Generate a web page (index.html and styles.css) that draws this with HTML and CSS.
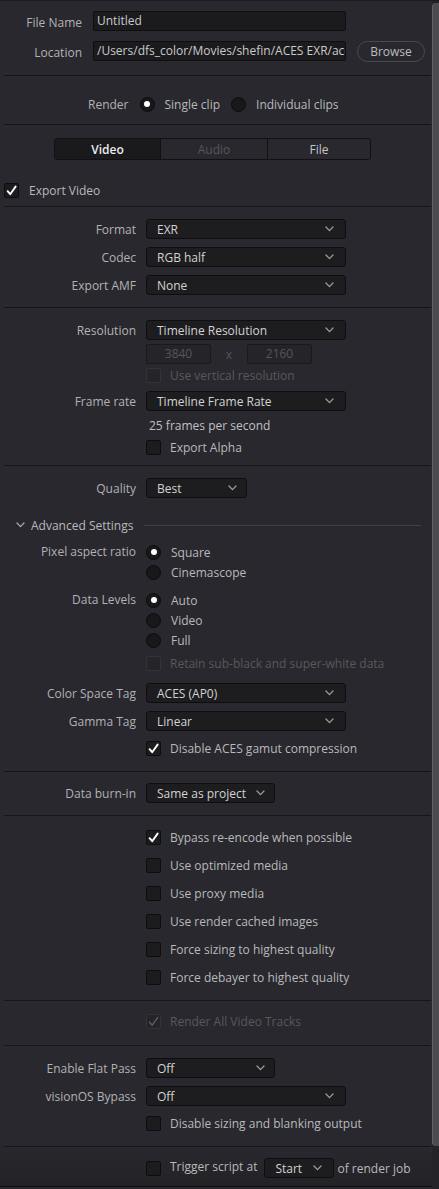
FILE: index.html
```html
<!DOCTYPE html>
<html lang="en">
<head>
<meta charset="utf-8">
<title>Render Settings</title>
<link rel="stylesheet" href="styles.css">
</head>
<body>
<div class="window">
  <div class="panel">

    <section class="sec sec-file">
      <div class="file-grid">
        <div class="label">File Name</div>
        <div class="field">Untitled</div>
        <div></div>
        <div class="label">Location</div>
        <div class="field">/Users/dfs_color/Movies/shefin/ACES EXR/aces</div>
        <div class="btn">Browse</div>
      </div>
    </section>
    <div class="divider"></div>

    <section class="sec sec-render">
      <div class="render-row">
        <span class="label">Render</span>
        <span class="opt"><span class="rb on"></span><span class="txt">Single clip</span></span>
        <span class="opt"><span class="rb"></span><span class="txt">Individual clips</span></span>
      </div>
    </section>
    <div class="divider"></div>

    <section class="sec sec-tabs">
      <div class="tabs">
        <div class="tab active">Video</div>
        <div class="tab dim">Audio</div>
        <div class="tab">File</div>
      </div>
      <div class="export-row">
        <span class="cb"><svg viewBox="0 0 13 13"><path d="M2.6 7.2 L5.2 10.2 L10.6 2.6" class="tick"/></svg></span>
        <span class="txt">Export Video</span>
      </div>
    </section>
    <div class="divider"></div>

    <section class="sec sec-format">
      <div class="frow h28"><div class="label">Format</div><div class="dd"><span>EXR</span><svg class="chev" viewBox="0 0 9 6"><polyline points="1,1 4.5,4.6 8,1"/></svg></div></div>
      <div class="frow h28"><div class="label">Codec</div><div class="dd"><span>RGB half</span><svg class="chev" viewBox="0 0 9 6"><polyline points="1,1 4.5,4.6 8,1"/></svg></div></div>
      <div class="frow h28"><div class="label">Export AMF</div><div class="dd"><span>None</span><svg class="chev" viewBox="0 0 9 6"><polyline points="1,1 4.5,4.6 8,1"/></svg></div></div>
    </section>
    <div class="divider"></div>

    <section class="sec sec-res">
      <div class="frow h28"><div class="label">Resolution</div><div class="dd"><span>Timeline Resolution</span><svg class="chev" viewBox="0 0 9 6"><polyline points="1,1 4.5,4.6 8,1"/></svg></div></div>
      <div class="frow h20"><div></div>
        <div class="dims"><div class="dimfield">3840</div><span class="x">x</span><div class="dimfield">2160</div></div>
      </div>
      <div class="frow h23"><div></div><div class="opt opt-cb"><span class="cb dis"></span><span class="txt dimtxt">Use vertical resolution</span></div></div>
      <div class="frow h28"><div class="label">Frame rate</div><div class="dd"><span>Timeline Frame Rate</span><svg class="chev" viewBox="0 0 9 6"><polyline points="1,1 4.5,4.6 8,1"/></svg></div></div>
      <div class="frow h20"><div></div><div class="fps">25 frames per second</div></div>
      <div class="frow h24"><div></div><div class="opt opt-cb"><span class="cb"></span><span class="txt">Export Alpha</span></div></div>
    </section>
    <div class="divider"></div>

    <section class="sec sec-quality">
      <div class="frow h28"><div class="label">Quality</div><div class="dd dd-sm"><span>Best</span><svg class="chev" viewBox="0 0 9 6"><polyline points="1,1 4.5,4.6 8,1"/></svg></div></div>
      <div class="adv">
        <div class="adv-head"><svg class="chev adv-chev" viewBox="0 0 9 6"><polyline points="1,1 4.5,4.6 8,1"/></svg><span class="txt">Advanced Settings</span></div>
        <div class="adv-line"></div>
      </div>
      <div class="frow stack g-pixel">
        <div class="label">Pixel aspect ratio</div>
        <div class="opts">
          <div class="opt"><span class="rb on"></span><span class="txt">Square</span></div>
          <div class="opt"><span class="rb"></span><span class="txt">Cinemascope</span></div>
        </div>
      </div>
      <div class="frow stack g-levels">
        <div class="label">Data Levels</div>
        <div class="opts">
          <div class="opt"><span class="rb on"></span><span class="txt">Auto</span></div>
          <div class="opt"><span class="rb"></span><span class="txt">Video</span></div>
          <div class="opt"><span class="rb"></span><span class="txt">Full</span></div>
        </div>
      </div>
      <div class="frow h20 g-retain"><div></div><div class="opt opt-cb"><span class="cb dis"></span><span class="txt dimtxt">Retain sub-black and super-white data</span></div></div>
      <div class="frow h28 g-cs"><div class="label">Color Space Tag</div><div class="dd"><span>ACES (AP0)</span><svg class="chev" viewBox="0 0 9 6"><polyline points="1,1 4.5,4.6 8,1"/></svg></div></div>
      <div class="frow h28"><div class="label">Gamma Tag</div><div class="dd"><span>Linear</span><svg class="chev" viewBox="0 0 9 6"><polyline points="1,1 4.5,4.6 8,1"/></svg></div></div>
      <div class="frow h20 g-aces"><div></div><div class="opt opt-cb"><span class="cb"><svg viewBox="0 0 13 13"><path d="M2.6 7.2 L5.2 10.2 L10.6 2.6" class="tick"/></svg></span><span class="txt">Disable ACES gamut compression</span></div></div>
    </section>
    <div class="divider"></div>

    <section class="sec sec-burn">
      <div class="frow h28"><div class="label">Data burn-in</div><div class="dd dd-md"><span>Same as project</span><svg class="chev" viewBox="0 0 9 6"><polyline points="1,1 4.5,4.6 8,1"/></svg></div></div>
    </section>
    <div class="divider"></div>

    <section class="sec sec-checks">
      <div class="frow h28"><div></div><div class="opt opt-cb"><span class="cb"><svg viewBox="0 0 13 13"><path d="M2.6 7.2 L5.2 10.2 L10.6 2.6" class="tick"/></svg></span><span class="txt">Bypass re-encode when possible</span></div></div>
      <div class="frow h28"><div></div><div class="opt opt-cb"><span class="cb"></span><span class="txt">Use optimized media</span></div></div>
      <div class="frow h28"><div></div><div class="opt opt-cb"><span class="cb"></span><span class="txt">Use proxy media</span></div></div>
      <div class="frow h28"><div></div><div class="opt opt-cb"><span class="cb"></span><span class="txt">Use render cached images</span></div></div>
      <div class="frow h28"><div></div><div class="opt opt-cb"><span class="cb"></span><span class="txt">Force sizing to highest quality</span></div></div>
      <div class="frow h28"><div></div><div class="opt opt-cb"><span class="cb"></span><span class="txt">Force debayer to highest quality</span></div></div>
    </section>
    <div class="divider"></div>

    <section class="sec sec-tracks">
      <div class="frow h20"><div></div><div class="opt opt-cb"><span class="cb dis"><svg viewBox="0 0 13 13"><path d="M2.6 7.2 L5.2 10.2 L10.6 2.6" class="tick dimtick"/></svg></span><span class="txt dimtxt">Render All Video Tracks</span></div></div>
    </section>
    <div class="divider"></div>

    <section class="sec sec-flat">
      <div class="frow h28"><div class="label">Enable Flat Pass</div><div class="dd dd-md"><span>Off</span><svg class="chev" viewBox="0 0 9 6"><polyline points="1,1 4.5,4.6 8,1"/></svg></div></div>
      <div class="frow h28"><div class="label">visionOS Bypass</div><div class="dd"><span>Off</span><svg class="chev" viewBox="0 0 9 6"><polyline points="1,1 4.5,4.6 8,1"/></svg></div></div>
      <div class="frow h20 g-sizing"><div></div><div class="opt opt-cb"><span class="cb"></span><span class="txt">Disable sizing and blanking output</span></div></div>
    </section>
    <div class="divider"></div>

    <section class="sec sec-trigger">
      <div class="frow h20"><div></div>
        <div class="trigger">
          <span class="cb"></span>
          <span class="txt trig-txt">Trigger script at</span>
          <div class="dd dd-xs"><span>Start</span><svg class="chev" viewBox="0 0 9 6"><polyline points="1,1 4.5,4.6 8,1"/></svg></div>
          <span class="txt of-txt">of render job</span>
        </div>
      </div>
    </section>

  </div>
  <div class="scroll"><div class="thumb"></div></div>
</div>
</body>
</html>
```

FILE: styles.css
```css
* { box-sizing: border-box; }

html, body {
  margin: 0;
  padding: 0;
  background: #28282e;
}

body {
  font-family: "Open Sans", "Liberation Sans", sans-serif;
  font-size: 12px;
  color: #b6b6b8;
  width: 439px;
  height: 1189px;
  overflow: hidden;
}

.window {
  display: flex;
  width: 439px;
  height: 1189px;
  border-top: 1px solid #1d1d21;
}

.panel {
  width: 432px;
  flex: none;
  display: flex;
  flex-direction: column;
}

.scroll {
  width: 7px;
  flex: none;
  padding-top: 2px;
  background: #242428;
}

.thumb {
  height: 1143px;
  background: #4b4b50;
  border-left: 1px solid #606066;
  border-radius: 4px 0 0 4px;
}

.divider {
  height: 1px;
  flex: none;
  background: #161619;
  margin: 0 1px 0 4px;
}

.label {
  text-align: right;
  color: #b2b2b4;
  white-space: nowrap;
}

.txt {
  white-space: nowrap;
  color: #b9b9bb;
}

.dimtxt { color: #58585d; }

/* ---------- file section ---------- */
.sec-file { padding: 10px 0 14px; }

.file-grid {
  display: grid;
  grid-template-columns: 82px 253px 68px;
  grid-auto-rows: 20px;
  column-gap: 11px;
  row-gap: 10px;
  align-items: center;
}

.file-grid .label { padding-top: 2px; }

.field {
  height: 20px;
  background: #1b1b1d;
  border: 1px solid #0f0f11;
  border-radius: 2px;
  padding: 0 3px;
  color: #cacacc;
  line-height: 18px;
  overflow: hidden;
  white-space: nowrap;
  text-overflow: clip;
}

.btn {
  height: 21px;
  border: 1px solid #4a4a4f;
  border-radius: 11px;
  color: #bdbdbf;
  text-align: center;
  line-height: 20px;
  align-self: start;
}

/* ---------- render ---------- */
.sec-render { padding: 18px 0 10px; }

.render-row {
  height: 20px;
  display: flex;
  align-items: center;
  padding-left: 88px;
  gap: 11px;
}

.opt {
  display: flex;
  align-items: center;
  gap: 10px;
  height: 20px;
}

.opt-cb { gap: 9px; }

.rb {
  width: 15px;
  height: 15px;
  flex: none;
  border-radius: 50%;
  background: #18181a;
  border: 1px solid #0c0c0e;
  display: flex;
  align-items: center;
  justify-content: center;
}

.rb.on::after {
  content: "";
  width: 6px;
  height: 6px;
  border-radius: 50%;
  background: #ffffff;
}

.cb {
  width: 15px;
  height: 15px;
  flex: none;
  border: 1px solid #0d0d0f;
  background: #1c1c1e;
  border-radius: 2px;
  display: flex;
  align-items: center;
  justify-content: center;
}

.cb svg { width: 13px; height: 13px; }

.tick {
  fill: none;
  stroke: #ffffff;
  stroke-width: 1.9;
  stroke-linecap: round;
  stroke-linejoin: round;
}

.tick.dimtick { stroke: #5e5e62; stroke-width: 1.4; }

.cb.dis {
  background: #252529;
  border-color: #343438;
}

/* ---------- tabs ---------- */
.sec-tabs { padding: 13px 0 6px; }

.tabs {
  margin-left: 54px;
  width: 317px;
  height: 22px;
  display: grid;
  grid-template-columns: 105px 107px 1fr;
  border: 1px solid #111113;
  border-radius: 3px;
  overflow: hidden;
}

.tab {
  text-align: center;
  line-height: 21px;
  color: #c6c6c8;
  border-left: 1px solid #111113;
}

.tab:first-child { border-left: none; }

.tab.active {
  background: #1a1a1c;
  color: #ececee;
  font-weight: 600;
}

.tab.dim { color: #57575c; }

.export-row {
  margin-top: 20px;
  height: 20px;
  display: flex;
  align-items: center;
  gap: 10px;
  padding-left: 4px;
}

/* ---------- form rows ---------- */
.frow {
  display: grid;
  grid-template-columns: 136px 1fr;
  column-gap: 10px;
  align-items: center;
}

.h20 { height: 20px; }
.h23 { height: 23px; }
.h24 { height: 24px; }
.h28 { height: 28px; }

.dd {
  width: 200px;
  height: 20px;
  background: #1d1d1f;
  border: 1px solid #0e0e10;
  border-radius: 3px;
  display: flex;
  align-items: center;
  justify-content: space-between;
  padding: 0 11px 0 10px;
  color: #d2d2d4;
  white-space: nowrap;
}

.dd-sm { width: 101px; padding-right: 9px; }
.dd-md { width: 129px; padding-right: 9px; }
.dd-xs { width: 70px; padding-right: 11px; }

.chev {
  width: 9px;
  height: 6px;
  flex: none;
}

.chev polyline {
  fill: none;
  stroke: #9c9c9f;
  stroke-width: 1.3;
  stroke-linecap: round;
  stroke-linejoin: round;
}

.sec-format { padding: 8px 0; }

.sec-res { padding: 8px 0 6px; }

.dims {
  display: flex;
  align-items: center;
}

.dimfield {
  width: 65px;
  height: 20px;
  background: #252529;
  border: 1px solid #1a1a1c;
  border-radius: 2px;
  color: #55555a;
  text-align: center;
  line-height: 18px;
}

.x {
  width: 36px;
  text-align: center;
  color: #55555a;
}

.fps {
  padding-left: 3px;
  color: #c0c0c2;
}

/* ---------- quality / advanced ---------- */
.sec-quality { padding: 8px 0 13px; }

.adv {
  margin-top: 13px;
  height: 20px;
  display: grid;
  grid-template-columns: 144px 1fr;
  align-items: center;
  padding-right: 11px;
}

.adv-head {
  display: flex;
  align-items: center;
  padding-left: 16px;
  gap: 6px;
}

.adv-chev polyline { stroke: #a8a8ab; }

.adv-line {
  height: 1px;
  background: #404045;
}

.stack { align-items: start; }
.stack .label { line-height: 20px; }

.g-pixel { margin-top: 7px; }
.g-levels { margin-top: 8px; }
.g-retain { margin-top: 3px; }
.g-cs { margin-top: 6px; }
.g-aces { margin-top: 3px; }

.opts {
  display: flex;
  flex-direction: column;
}

.sec-burn { padding: 7px 0 8px; }

.sec-checks { padding: 7px 0 9px; }

.sec-tracks { padding: 10px 0 14px; }

.sec-flat { padding: 8px 0 13px; }

.g-sizing { margin-top: 3px; }

/* ---------- trigger ---------- */
.sec-trigger {
  padding: 11px 0 8px;
  flex: none;
  background: linear-gradient(#28282e, #222227);
  border-bottom: 1px solid #0f0f11;
}

.trigger {
  display: flex;
  align-items: center;
  height: 20px;
}

.trig-txt { margin-left: 9px; margin-top: -3px; }

.trigger .dd { margin-left: 7px; }

.of-txt { margin-left: 3px; }
```
